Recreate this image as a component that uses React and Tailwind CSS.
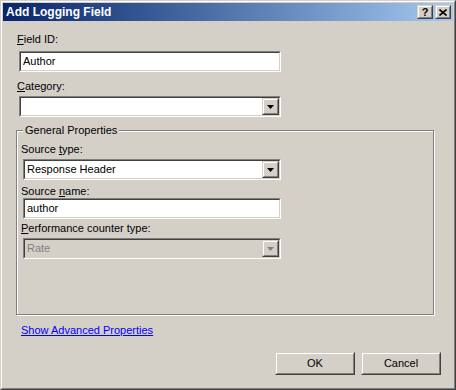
import React from "react";

function Sunken({ className = "", children }) {
  return (
    <div className={`border border-t-[#808080] border-l-[#808080] border-r-white border-b-white ${className}`}>
      <div className="h-full border border-t-[#404040] border-l-[#404040] border-r-[#d4d0c8] border-b-[#d4d0c8]">
        {children}
      </div>
    </div>
  );
}

function Raised({ className = "", children }) {
  return (
    <div className={`border border-t-[#d4d0c8] border-l-[#d4d0c8] border-r-[#404040] border-b-[#404040] ${className}`}>
      <div className="h-full border border-t-white border-l-white border-r-[#808080] border-b-[#808080] bg-[#d4d0c8] flex items-center justify-center">
        {children}
      </div>
    </div>
  );
}

function Arrow({ disabled }) {
  return (
    <svg width="7" height="4" viewBox="0 0 7 4">
      <path d="M0 0h7L3.5 4z" fill={disabled ? "#808080" : "#000"} />
    </svg>
  );
}

function TextBox({ value, width }) {
  return (
    <Sunken className={`${width} h-[21px]`}>
      <div className="h-full bg-white pl-[2px] flex items-center leading-none">{value}</div>
    </Sunken>
  );
}

function Select({ value, width, disabled }) {
  return (
    <Sunken className={`${width} h-[21px]`}>
      <div className={`h-full flex items-stretch ${disabled ? "bg-[#d4d0c8]" : "bg-white"}`}>
        <div className={`flex-1 pl-[2px] flex items-center leading-none ${disabled ? "text-[#808080]" : ""}`}>{value}</div>
        <Raised className="w-[17px]">
          <Arrow disabled={disabled} />
        </Raised>
      </div>
    </Sunken>
  );
}

function Label({ children, className = "" }) {
  return <div className={`h-[13px] leading-[13px] ${className}`}>{children}</div>;
}

export default function App() {
  return (
    <div className="w-[456px] h-[390px] bg-[#d4d0c8] border border-t-[#d4d0c8] border-l-[#d4d0c8] border-r-[#404040] border-b-[#404040] font-['Liberation_Sans',Arial,sans-serif] text-[11px] text-black">
      <div className="h-full border border-t-white border-l-white border-r-[#808080] border-b-[#808080] p-px flex flex-col">
        {/* title bar */}
        <div className="h-[18px] bg-gradient-to-r from-[#0a246a] to-[#a6caf0] flex items-center pl-[3px] pr-[2px]">
          <span className="flex-1 text-white font-bold text-[12px] leading-none">Add Logging Field</span>
          <Raised className="w-[16px] h-[14px]">
            <span className="font-bold text-[11px] leading-none">?</span>
          </Raised>
          <Raised className="w-[16px] h-[14px] ml-[2px]">
            <svg width="8" height="7" viewBox="0 0 8 7">
              <path d="M0.5 0.5l7 6M7.5 0.5l-7 6" stroke="#000" strokeWidth="1.6" />
            </svg>
          </Raised>
        </div>

        {/* body */}
        <div className="flex-1 flex flex-col pl-[13px] pr-[12px]">
          <Label className="mt-[12px] pl-[1px]"><u>F</u>ield ID:</Label>
          <div className="mt-[5px] ml-[3px]"><TextBox value="Author" width="w-[262px]" /></div>
          <Label className="mt-[8px] pl-[1px]"><u>C</u>ategory:</Label>
          <div className="mt-[3px] ml-[3px]"><Select value="" width="w-[262px]" /></div>

          <div className="mt-[13px] w-[418px] h-[185px] border border-[#808080] shadow-[inset_1px_1px_0_white,1px_1px_0_white] flex flex-col">
            <div className="-mt-[7px] ml-[6px] self-start bg-[#d4d0c8] px-[2px] h-[13px] leading-[13px]">General Properties</div>
            <Label className="mt-[6px] pl-[4px]">Source <u>t</u>ype:</Label>
            <div className="mt-[3px] ml-[6px]"><Select value="Response Header" width="w-[258px]" /></div>
            <Label className="mt-[5px] pl-[4px]">Source <u>n</u>ame:</Label>
            <div className="ml-[6px]"><TextBox value="author" width="w-[258px]" /></div>
            <Label className="mt-[3px] pl-[4px]"><u>P</u>erformance counter type:</Label>
            <div className="mt-[3px] ml-[6px]"><Select value="Rate" width="w-[258px]" disabled /></div>
          </div>

          <div className="mt-[9px] ml-[5px] h-[13px] leading-[13px]">
            <span className="text-[#0000ff] underline">Show Advanced Properties</span>
          </div>

          <div className="mt-[15px] flex justify-end gap-[6px]">
            <Raised className="w-[80px] h-[23px]"><span className="leading-none">OK</span></Raised>
            <Raised className="w-[80px] h-[23px]"><span className="leading-none">Cancel</span></Raised>
          </div>
        </div>
      </div>
    </div>
  );
}
